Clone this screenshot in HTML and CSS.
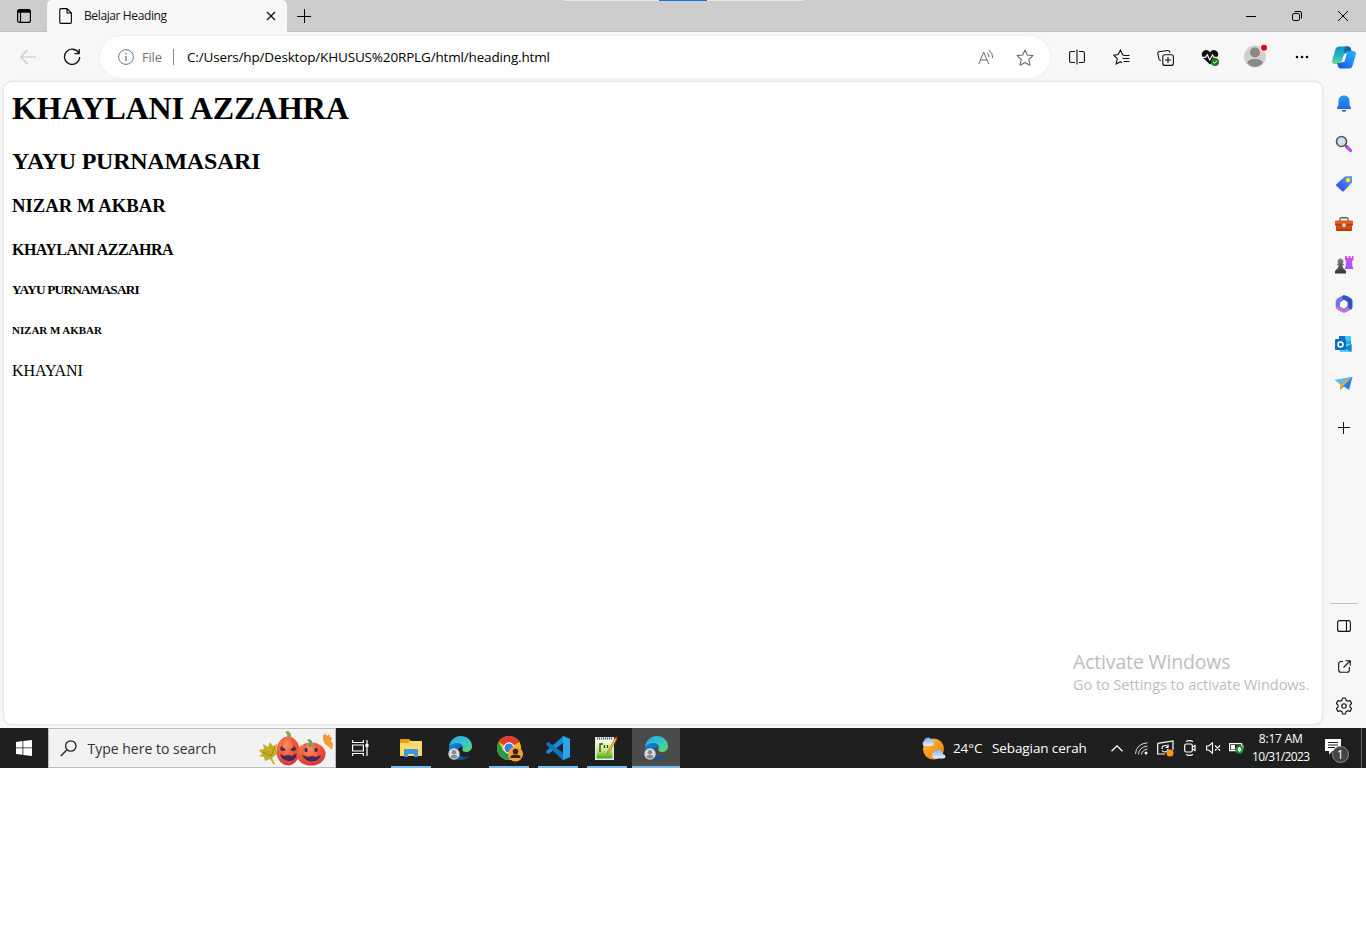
FILE: index.html
```html
<!DOCTYPE html>
<html lang="id">
<head>
<meta charset="utf-8">
<title>Belajar Heading</title>
<link rel="stylesheet" href="styles.css">
</head>
<body>
<svg class="defs" width="0" height="0">
  <defs>
    <linearGradient id="edgeTop" x1="0" y1="0" x2="1" y2="1"><stop offset="0" stop-color="#2aa8e0"/><stop offset=".5" stop-color="#31c3d2"/><stop offset="1" stop-color="#62dc58"/></linearGradient>
    <linearGradient id="edgeLow" x1="0" y1="0" x2="1" y2="1"><stop offset="0" stop-color="#1688d8"/><stop offset="1" stop-color="#0b3f86"/></linearGradient>
    <linearGradient id="bell" x1="0" y1="0" x2="0" y2="1"><stop offset="0" stop-color="#16a0e8"/><stop offset="1" stop-color="#2b62ec"/></linearGradient>
    <linearGradient id="tag" x1="1" y1="0" x2="0" y2="1"><stop offset="0" stop-color="#3fa4fa"/><stop offset="1" stop-color="#3d3ee8"/></linearGradient>
    <linearGradient id="box" x1="0" y1="0" x2="0" y2="1"><stop offset="0" stop-color="#e35a20"/><stop offset="1" stop-color="#bf3406"/></linearGradient>
    <linearGradient id="rook" x1="0" y1="0" x2="0" y2="1"><stop offset="0" stop-color="#e04bec"/><stop offset="1" stop-color="#9b58ff"/></linearGradient>
    <linearGradient id="pawn" x1="0" y1="0" x2="0" y2="1"><stop offset="0" stop-color="#888"/><stop offset="1" stop-color="#333"/></linearGradient>
    <linearGradient id="cpA" x1="0" y1="0" x2="0" y2="1"><stop offset="0" stop-color="#0a92d8"/><stop offset=".6" stop-color="#28bcc0"/><stop offset="1" stop-color="#72d88c"/></linearGradient>
    <linearGradient id="cpB" x1="0" y1="1" x2="1" y2="0"><stop offset="0" stop-color="#174ce0"/><stop offset=".5" stop-color="#1f87fa"/><stop offset="1" stop-color="#29baf7"/></linearGradient>
    <linearGradient id="sun" x1="0" y1="0" x2="1" y2="1"><stop offset="0" stop-color="#ffc02c"/><stop offset="1" stop-color="#f07a18"/></linearGradient>
    <linearGradient id="cloud" x1="0" y1="0" x2="0" y2="1"><stop offset="0" stop-color="#7fb0f0"/><stop offset="1" stop-color="#e6effc"/></linearGradient>
    <radialGradient id="pump" cx=".4" cy=".3" r=".8"><stop offset="0" stop-color="#ff8f60"/><stop offset=".6" stop-color="#ee5230"/><stop offset="1" stop-color="#c22850"/></radialGradient>
    <linearGradient id="npp" x1="0" y1="0" x2="0" y2="1"><stop offset="0" stop-color="#fafff0"/><stop offset=".55" stop-color="#c5ec75"/><stop offset="1" stop-color="#44a818"/></linearGradient>
    <symbol id="edge" viewBox="0 0 24 24">
      <path d="M1 11C2 4 7 0 12.500 0 19 0 24 4.500 24 10c0 4-3 6-6 6-2.500 0-4-1-3.500-2.500C15.500 11 13 8 9 8c-4 0-6 2-8 3z" fill="url(#edgeTop)"/>
      <path d="M1 11c2-3 5-4 8-4 3.500 0 6 2 6.300 4.200C13 9.800 10 11.500 10 15c0 4 4 7 9 5.500 1.500-.5 2.500-1 3.200-1.500C20 22.500 16 24 12.500 24 5 24 0 18 1 11z" fill="url(#edgeLow)"/>
      <circle cx="6" cy="18" r="5.700" fill="#d8d8d8"/><circle cx="6" cy="16.300" r="2.200" fill="#8a8a8a"/><path d="M2.500 21c.5-3 6.500-3 7 0-2 2-5 2-7 0z" fill="#8a8a8a"/>
    </symbol>
  </defs>
</svg>
<div class="screen">
  <header class="titlebar">
    <div class="tab-actions"><svg width="16" height="16" viewBox="0 0 16 16" fill="none" stroke="#000" stroke-width="1.200"><rect x="1.600" y="1.600" width="12.800" height="12.800" rx="2"/><path d="M1.600 3.200h12.800M4.500 4v10.400" /><path d="M2 3.200h12" stroke-width="3"/></svg></div>
    <div class="tab">
      <svg class="doc" width="14" height="16" viewBox="0 0 14 16" fill="none" stroke="#000" stroke-width="1.100"><path d="M2 .6h6l4.400 4.400v9.200q0 1.200-1.200 1.200H2q-1.200 0-1.200-1.200V1.800Q.8.6 2 .6zM8 .6v4.400h4.400"/></svg>
      <span class="tab-title">Belajar Heading</span>
      <svg class="tab-close" width="10" height="10" viewBox="0 0 10 10" stroke="#111" stroke-width="1.300"><path d="M1 1l8 8M9 1L1 9"/></svg>
    </div>
    <div class="new-tab"><svg width="14" height="14" viewBox="0 0 14 14" stroke="#000"><path d="M7.500 0v14M0 7.500h14"/></svg></div>
    <div class="capture-strip"><i></i></div>
    <div class="win-controls">
      <span><svg width="10" height="10" viewBox="0 0 10 10" stroke="#000"><path d="M0 5.500h10"/></svg></span>
      <span><svg width="10" height="10" viewBox="0 0 10 10" fill="none" stroke="#000"><rect x=".5" y="2.500" width="7" height="7" rx="1.300"/><path d="M2.500.5H8Q9.500.5 9.500 2v5.500"/></svg></span>
      <span><svg width="10" height="10" viewBox="0 0 10 10" stroke="#000"><path d="M0 0l10 10M10 0L0 10"/></svg></span>
    </div>
  </header>

  <nav class="toolbar">
    <div class="nav-back"><svg width="16" height="16" viewBox="0 0 16 16" fill="none" stroke="#c8c8c8" stroke-width="1.100"><path d="M16 8H.8M7.500 1L.7 8l6.800 7"/></svg></div>
    <div class="nav-reload"><svg width="18" height="18" viewBox="0 0 18 18" fill="none" stroke="#111" stroke-width="1.300"><path d="M15.800 5.200A7.600 7.600 0 1 0 16.700 9M16.200 1v4.600h-4.700"/></svg></div>
    <div class="omnibox">
      <svg width="16" height="16" viewBox="0 0 16 16" fill="none" stroke="#777"><circle cx="8" cy="8" r="7.400"/><path d="M8 7v5M8 4v1.400" stroke-width="1.300"/></svg>
      <span class="scheme">File</span>
      <i class="sep"></i>
      <span class="url">C:/Users/hp/Desktop/KHUSUS%20RPLG/html/heading.html</span>
      <svg class="read" width="16" height="17" viewBox="0 0 16 17" fill="none" stroke="#6c6c6c"><path d="M.7 15L5.700 3l5 12M2.400 11h6.700M9 3.800q2 1.500 1.800 4.200M10.500 1.200q4.300 2.500 4 7.800"/></svg>
      <svg class="star" width="18" height="17" viewBox="0 0 18 17" fill="none" stroke="#6c6c6c" stroke-width="1.100" stroke-linejoin="round"><path d="M9 1l2.300 5 5.700.6-4.200 3.900 1.100 5.700L9 13.400l-4.900 2.800 1.100-5.700L1 6.600 6.700 6z"/></svg>
    </div>
    <div class="tools">
      <span><svg width="16" height="16" viewBox="0 0 16 16" fill="none" stroke="#111" stroke-width="1.100"><path d="M6 2.500H2Q.6 2.500.6 4v8q0 1.500 1.400 1.500h4M10 2.500h4q1.400 0 1.400 1.500v8q0 1.500-1.400 1.500h-4M8 .5v15"/></svg></span>
      <span><svg width="17" height="17" viewBox="0 0 17 17" fill="none" stroke="#111" stroke-width="1.100"><path d="M11 6L9.500 5.800 7.500 1 5.200 5.500.7 6.100 4.200 9.500 3.200 15l4.300-2.300L9 13.700M10.500 6.500h6M9.500 9.500h7M10.500 12.500h6"/></svg></span>
      <span><svg width="17" height="17" viewBox="0 0 17 17" fill="none" stroke="#111" stroke-width="1.100"><rect x="5.800" y="5.800" width="10.600" height="10.600" rx="2"/><path d="M11 8v6M8 11h6M13 3.700q-.3-2.500-2.500-2.200L2 2.700Q.5 3 .8 4.500L2 10q.3 1.500 2 1.500"/></svg></span>
      <span><svg width="19" height="17" viewBox="0 0 19 17"><path d="M9 15.500L2 9C-.5 6 1 1 5 1q2.500 0 4 2.200Q10.500 1 13 1c4 0 5.500 5 3 8z" fill="#111"/><path d="M0 8.300h4.500l1.800-2.600 2.400 5.300L11.500 6l1.500 2.300h4.500" fill="none" stroke="#f7f7f7" stroke-width="1.200"/><circle cx="14" cy="13" r="4" fill="#16811c"/><path d="M12 13l1.500 1.200 2.600-2.500" fill="none" stroke="#fff"/></svg></span>
      <span class="profile"><svg width="24" height="24" viewBox="0 0 24 24"><circle cx="11" cy="12.500" r="11" fill="#d2d0ce"/><circle cx="11" cy="8.500" r="5" fill="#8b8885"/><path d="M3.300 19.500q0-4.500 7.700-4.500t7.700 4.500Q11 26.500 3.300 19.500z" fill="#8b8885"/><circle cx="20" cy="3.800" r="4" fill="#f7f7f7"/><circle cx="20" cy="3.800" r="3" fill="#e6000c"/></svg></span>
      <span><svg width="14" height="4" viewBox="0 0 14 4"><circle cx="2" cy="2" r="1.300"/><circle cx="7" cy="2" r="1.300"/><circle cx="12" cy="2" r="1.300"/></svg></span>
      <span class="copilot"><svg width="24" height="23" viewBox="0 0 24 23"><path d="M7 .5h9q2.500 0 3 3L20 7h-5l-2.500 1-2.300 8q-.7 2-2.700 2H3q-3.800 0-2.700-4L3.500 3Q4.300.5 7 .5z" fill="url(#cpA)"/><path d="M17 22.500H9q-2.700 0-3.200-2.700L5.200 17h3q2 0 2.600-2l2.300-7.500Q13.800 5 16 5h5q3.700.5 2.700 4L20.500 20q-.8 2.500-3.500 2.500z" fill="url(#cpB)"/><path d="M12.300 7.500H15L12.300 16H9.500z" fill="#f7fcff"/><path d="M13 .5h3q2.500 0 3 3l.5 1.800H16Q13.500 5 12 9z" fill="#14679c"/></svg></span>
    </div>
  </nav>

  <div class="workspace">
    <main class="page">
      <h1>KHAYLANI AZZAHRA</h1>
      <h2>YAYU PURNAMASARI</h2>
      <h3>NIZAR M AKBAR</h3>
      <h4>KHAYLANI AZZAHRA</h4>
      <h5>YAYU PURNAMASARI</h5>
      <h6>NIZAR M AKBAR</h6>
      <p>KHAYANI</p>
      <aside class="watermark"><div class="wm-title">Activate Windows</div><div class="wm-text">Go to Settings to activate Windows.</div></aside>
    </main>
    <aside class="sidebar">
      <span><svg width="16" height="18" viewBox="0 0 16 18"><path d="M5.500 15h5q-.5 2-2.500 2t-2.500-2z" fill="#666"/><path d="M8 .5C4.500.5 2.500 3 2.500 6v4L1 13v1h14v-1l-1.500-3V6C13.500 3 11.500.5 8 .5z" fill="url(#bell)"/></svg></span>
      <span><svg width="18" height="18" viewBox="0 0 18 18"><path d="M11.500 11.500l4 4" stroke="#bd4cf0" stroke-width="3.200" stroke-linecap="round"/><path d="M10 10l2 2" stroke="#555" stroke-width="1.500"/><circle cx="6.500" cy="6.500" r="5" fill="#c5e5fa" stroke="#555" stroke-width="1.600"/></svg></span>
      <span><svg width="18" height="18" viewBox="0 0 18 18"><path d="M10 1.500l6-.5q1 0 1 1v5.500L9 16q-1 1-2 0L1.500 11q-1-1 0-2z" fill="url(#tag)"/><circle cx="13" cy="5" r="1.800" fill="#fff" stroke="#f5c32c" stroke-width="1.400"/></svg></span>
      <span><svg width="18" height="16" viewBox="0 0 18 16"><path d="M5 5V3q0-1.300 1.300-1.300h5.400Q13 1.700 13 3v2" fill="none" stroke="#666" stroke-width="1.400"/><path d="M1 4.500h16q1 0 1 1V9H0V5.500q0-1 1-1z" fill="#e25a20"/><path d="M1 9h16v5q0 1-1 1H2q-1 0-1-1z" fill="url(#box)"/><path d="M0 9h18" stroke="#952803"/><rect x="7.300" y="7.200" width="3.400" height="4" rx="1" fill="#c9c9c9"/></svg></span>
      <span><svg width="20" height="19" viewBox="0 0 20 19"><path d="M11 1h2v2h1.500V1h2v2H18V1h1.500v4l-1.500 1 .5 6 1 2h-9l1-2 .5-6L11 5z" fill="url(#rook)"/><path d="M6.500 3.500a3 3 0 0 1 2 5.200h1.200v1.600H8.400q0 2.500 2 4L12 16v2.500H1V16l1.600-1.700q2-1.500 2-4H3.300V8.700h1.200a3 3 0 0 1 2-5.200z" fill="url(#pawn)"/></svg></span>
      <span><svg width="18" height="18" viewBox="0 0 18 18"><path d="M9 0L4 2.500Q.7 4 .7 7v5L5 14V8l4.500-3.500L12 2z" fill="#6f7ae4"/><path d="M.7 11.500Q1 14 3 15l4 2.300q2 1 4 0l5-2.800q1.300-1 1.300-2.500L13 10l-4 3.500-4-2z" fill="#b573dd"/><path d="M8 0q3 0 5 1.500l3 1.700q1.500 1 1.500 3V12q0 1.500-1.500 2.500L12.500 12V7L8.500 4.500q-2-2 0-4.500z" fill="#2a59b4"/><path d="M9 5.300l3.300 1.900v3.800L9 12.900 5.700 11V7.200z" fill="#fff"/></svg></span>
      <span><svg width="18" height="16" viewBox="0 0 18 16"><rect x="4" y="0" width="12" height="11" rx="1" fill="#28a8ea"/><path d="M4 0h6v5H4z" fill="#1172c0"/><path d="M10 0h5q1 0 1 1v4h-6z" fill="#45c7f4"/><path d="M4 8h12.500v7q0 1-1 1H5z" fill="#50d0f7"/><path d="M16.500 8v8L9 12z" fill="#1684d0"/><rect x="0" y="3" width="11" height="11" rx="1" fill="#0870c4"/><circle cx="5.500" cy="8.500" r="2.500" fill="none" stroke="#fff" stroke-width="1.500"/></svg></span>
      <span><svg width="18" height="16" viewBox="0 0 18 16"><path d="M0 4L17.500 1 14 14 9 10.500 5 14V8z" fill="#2382e8"/><path d="M0 4L17.500 1 5 8z" fill="#51c3fa"/><path d="M5 8L17.500 1 8 10l-3 4z" fill="#f8aa20"/></svg></span>
      <span class="add"><svg width="12" height="12" viewBox="0 0 12 12" stroke="#111"><path d="M5.500 0v12M0 5.500h12"/></svg></span>
      <i class="rule"></i>
      <span><svg width="14" height="12" viewBox="0 0 14 12" fill="none" stroke="#111" stroke-width="1.100"><rect x=".6" y=".6" width="12.800" height="10.800" rx="2"/><path d="M9.500 1v10"/></svg></span>
      <span><svg width="13" height="13" viewBox="0 0 13 13" fill="none" stroke="#111" stroke-width="1.100"><path d="M5 1.500H3Q.7 1.500.7 4v6q0 2.300 2.300 2.300h6q2.300 0 2.300-2.300V7M7.500.7h4.800V5.500M12 1L5.500 7.500"/></svg></span>
      <span><svg width="18" height="18" viewBox="0 0 18 18" fill="none" stroke="#111" stroke-width="1.100" stroke-linejoin="round"><path d="M7.500 1h3l.5 2.300 1.700 1L15 3.600l1.600 2.700L15 8v2l1.600 1.700-1.600 2.700-2.300-.7-1.700 1-.5 2.300h-3L7 14.700l-1.700-1-2.300.7-1.600-2.700L3 10V8L1.400 6.300 3 3.600l2.300.7 1.700-1z"/><circle cx="9" cy="9" r="2.200"/></svg></span>
    </aside>
  </div>

  <footer class="taskbar">
    <div class="start"><svg width="16" height="16" viewBox="0 0 16 16" fill="#fff"><path d="M0 2l6.500-1v6.500H0zM7.300.9L16 0v7.500H7.300zM0 8.300h6.500v6.500L0 14zM7.300 8.300H16V16l-8.700-1z"/></svg></div>
    <div class="search">
      <svg width="17" height="17" viewBox="0 0 17 17" fill="none" stroke="#222" stroke-width="1.300"><circle cx="10.800" cy="6" r="5.200"/><path d="M7 9.800L.8 16"/></svg>
      <span>Type here to search</span>
      <svg class="pumpkins" width="76" height="37" viewBox="0 0 76 37">
        <path d="M1 20l5-1-1-5 5 3 2-5 3 4 4-2-1 6 1 4-5 4 3 6-1 1-4-6-5 2-1-4-5-1 3-2z" fill="#c4ae25"/><path d="M5 22l8 4 4-9" fill="none" stroke="#958414"/>
        <path d="M29 8q1-4-2-6l3-1q4 2 3 7z" fill="#7fae52"/>
        <ellipse cx="30" cy="21" rx="11.500" ry="14.500" fill="url(#pump)"/>
        <path d="M26 8q-4 13 0 26M34 8q4 13 0 26" fill="none" stroke="#d04a3c" stroke-width=".8"/>
        <path d="M22 20l1-4 5 4-2 1zM32 20l5-4 1 4-3 1z" fill="#46265c"/><path d="M22 24l4 2 4-1 4 1 5-3q-2 9-8 8-7 0-9-7z" fill="#46265c"/>
        <ellipse cx="53" cy="24" rx="14.500" ry="11.500" fill="url(#pump)"/>
        <path d="M47 14q-5 10 0 20M58 14q5 10 0 20" fill="none" stroke="#d04a3c" stroke-width=".8"/>
        <path d="M51 15q1-3-2-5l3-1q3 2 2 6l4 2-10-1z" fill="#6ba456"/>
        <ellipse cx="48" cy="20" rx="1.600" ry="2.300" fill="#46265c"/><ellipse cx="58" cy="20" rx="1.600" ry="2.300" fill="#46265c"/><path d="M44 25l6 2 4-1 4 1 5-2q-2 6.500-9 6.500T44 25z" fill="#46265c"/>
        <path d="M65 5l3-1 1 2 2-2 1 3 2 1-1 3 2 3-1 6-3-3-4-3-2-4z" fill="#f79a35"/>
      </svg>
    </div>
    <div class="taskview"><svg width="17" height="16" viewBox="0 0 17 16" fill="none" stroke="#fff" stroke-width="1.200"><path d="M.6 0v2.500h10.800V0M.6 16v-2.500h10.800V16M.6 5h10.800v6H.6zM15 0v16"/><path d="M13.500 5.500h3" stroke-width="3"/></svg></div>
    <div class="apps">
      <span class="open"><svg width="22" height="20" viewBox="0 0 22 20"><path d="M0 2q0-1 1-1h8l2 2h10q1 0 1 1v14H0z" fill="#e6a20c"/><path d="M0 5h8l2-2h11q1 0 1 1v14H0z" fill="#ffd868"/><path d="M4 19v-7q0-1 1-1h12q1 0 1 1v7h-4v-3H8v3z" fill="#3a97e0"/></svg></span>
      <span><svg width="24" height="24"><use href="#edge"/></svg></span>
      <span class="open chrome"><svg width="27" height="26" viewBox="0 0 27 26"><circle cx="12" cy="12" r="12" fill="#fbc116"/><path d="M12 12L1.600 6A12 12 0 0 1 22.400 6z" fill="#e33b2e"/><path d="M1.600 6A12 12 0 0 0 12 24l5.500-9H6.500z" fill="#299b48"/><path d="M12 6.300h10.500L12 0z" fill="#e33b2e"/><circle cx="12" cy="12" r="5.700" fill="#fff"/><circle cx="12" cy="12" r="4.500" fill="#3b7ded"/><circle cx="18.500" cy="18" r="7.500" fill="#f5a040"/><circle cx="18.500" cy="15.500" r="2.800" fill="#38240c"/><path d="M13.500 22v-1q0-2.500 5-2.500t5 2.500v1z" fill="#38240c"/></svg></span>
      <span class="open"><svg width="24" height="24" viewBox="0 0 24 24"><path d="M17 0l7 3v18l-7 3L7 14.500 2.500 18 .3 16.700V15L14 3z" fill="#1d8ad4"/><path d="M.3 7.300L2.500 6 17 17v7L.3 9z" fill="#0f73b8"/><path d="M17 7v10l-6.500-5z" fill="#202022"/><path d="M17 0l7 3v18l-7 3z" fill="#2ca4ee"/></svg></span>
      <span class="open"><svg width="23" height="24" viewBox="0 0 23 24"><path d="M0 1h19v23H0z" fill="#e9e9e9"/><path d="M1.500 4h16v18.500h-16z" fill="url(#npp)"/><path d="M2 2.500h16" stroke="#555" stroke-width="2" stroke-dasharray="1 1"/><path d="M5 16V8h3M9.500 9v3M12.500 9v3" fill="none" stroke="#29401d" stroke-width="1.300"/><path d="M20.500 1.500L13 15l-1 3 2.500-2L22 3z" fill="#f2c23d" stroke="#8d6120" stroke-width=".6"/><path d="M20.500 1.300l1.800 1" stroke="#d63b2c" stroke-width="2"/></svg></span>
      <span class="active"><svg width="24" height="24"><use href="#edge"/></svg></span>
    </div>
    <div class="weather">
      <svg width="25" height="23" viewBox="0 0 25 23"><circle cx="12.500" cy="12" r="10.500" fill="url(#sun)"/><path d="M3 9a3 3 0 0 1 0-5 4 4 0 0 1 7-2 3.500 3.500 0 0 1 3 3.500Q13 9 10 9z" fill="url(#cloud)"/><path d="M13 21.500a3.200 3.200 0 0 1 0-6 4 4 0 0 1 7-1.500q2 1 2 3 2.500.5 2.500 2.500 0 2-2.500 2z" fill="url(#cloud)"/></svg>
      <span class="temp">24°C</span><span class="cond">Sebagian cerah</span>
    </div>
    <div class="tray">
      <span class="t-chev"><svg width="12" height="7" viewBox="0 0 12 7" fill="none" stroke="#fff" stroke-width="1.300"><path d="M.5 6.300L6 .9l5.500 5.400"/></svg></span>
      <span class="t-wifi"><svg width="13" height="13" viewBox="0 0 13 13" fill="none" stroke="#ddd"><path d="M.5 12Q1 2 12.500.8M3.500 12.500Q4 5 12.500 4M6.500 12.500q.5-4.500 6-5.500"/><circle cx="11" cy="11" r="1.500" fill="#fff" stroke="none"/></svg></span>
      <span class="t-sync"><svg width="17" height="17" viewBox="0 0 17 17" fill="none" stroke="#fff" stroke-width="1.200"><path d="M.7 3.300L16 1v9M.7 3.300V14H8M5 9q0-3.500 3-3.500 2 0 3 1.700M11 4.500v3H8.500M11 9q0 3-3 3-2 0-3-1.500"/><circle cx="13" cy="13" r="3.500" fill="#ff9a08" stroke="none"/></svg></span>
      <span class="t-meet"><svg width="12" height="16" viewBox="0 0 12 16" fill="none" stroke="#fff" stroke-width="1.200"><rect x=".7" y="4" width="7.600" height="8" rx="1.500"/><path d="M8.500 7l2.500-1.500v5L8.500 9M2 1.500Q5.500-.2 9 1.500M2 14.500q3.500 1.700 7 0"/></svg></span>
      <span class="t-vol"><svg width="15" height="12" viewBox="0 0 15 12" fill="none" stroke="#fff" stroke-width="1.100"><path d="M.6 4h2L6.500.8v10.400L2.600 8h-2zM9 3.500l5 5M14 3.500l-5 5"/></svg></span>
      <span class="t-batt"><svg width="15" height="12" viewBox="0 0 15 12"><path d="M.6 1.600h12v7H.6z" fill="none" stroke="#fff" stroke-width="1.200"/><path d="M2 3h4v4.500H2zM13 3.500h1.500v3H13z" fill="#fff"/><circle cx="10.500" cy="7.500" r="4.200" fill="#17922d"/><path d="M10.500 4.800q4 3 0 5.200-4-2.200 0-5.200z" fill="#fff"/></svg></span>
      <div class="clock"><span class="time">8:17 AM</span><span class="date">10/31/2023</span></div>
      <div class="notif"><svg width="26" height="26" viewBox="0 0 26 26"><path d="M0 1h16v12H7.500L4 16.500V13H0z" fill="#fff"/><path d="M3 4.500h10M3 7h10M3 9.500h7" stroke="#222"/><circle cx="15.500" cy="16.500" r="8" fill="#444" stroke="#8b8b8b"/></svg><b>1</b></div>
      <i class="peek"></i>
    </div>
  </footer>
</div>
</body>
</html>
```

FILE: styles.css
```css
* { box-sizing: border-box; }
body { margin: 0; background: #fff; font-family: "Open Sans", "Noto Sans", sans-serif; color: #111; }
svg { display: block; flex: none; }
.defs { position: absolute; }
span, h1, h2, h3, h4, h5, h6, p { white-space: nowrap; }
.screen { width: 1366px; height: 768px; display: flex; flex-direction: column; overflow: hidden; background: #f7f7f7; }

.titlebar { position: relative; height: 32px; flex: none; display: flex; background: #cdcdcd; box-shadow: inset 0 -1px #bdbdbd; }
.tab-actions { width: 47px; display: flex; align-items: center; justify-content: center; }
.tab { width: 240px; display: flex; align-items: center; padding: 0 11px 0 12px; background: #f7f7f7; border-radius: 5px 5px 0 0; }
.tab-title { margin-left: 11px; font-size: 12px; letter-spacing: -.38px; line-height: 16px; }
.tab-close { margin-left: auto; }
.new-tab { display: flex; align-items: center; padding-left: 10px; }
.capture-strip { position: absolute; left: 563px; top: 0; width: 241px; height: 1px; background: #e6e6e6; display: flex; padding-left: 96px; }
.capture-strip i { width: 48px; background: #0f7ad6; }
.win-controls { margin-left: auto; display: flex; }
.win-controls span { width: 46px; display: flex; align-items: center; justify-content: center; }

.toolbar { height: 50px; flex: none; display: flex; align-items: center; }
.nav-back { width: 50px; padding-left: 20px; }
.nav-reload { width: 50px; padding-left: 13px; }
.omnibox { width: 950px; height: 42px; border-radius: 21px; background: #fff; display: flex; align-items: center; padding: 0 16px 0 18px; box-shadow: 0 0 3px #e8e8e8; }
.scheme { margin-left: 8px; width: 31px; font-size: 13px; letter-spacing: -.2px; color: #707070; }
.sep { width: 1px; height: 16px; background: #8c8c8c; }
.url { margin-left: 13px; font-size: 13.500px; letter-spacing: -.16px; color: #000; }
.read { margin-left: auto; }
.star { margin-left: 22px; }
.tools { display: flex; padding-left: 5px; }
.tools span { width: 44.300px; height: 30px; flex: none; display: flex; align-items: center; justify-content: center; }
.tools .profile { width: 48px; padding-top: 2px; align-items: flex-start; }
.tools .copilot { width: 40px; }

.workspace { flex: 1; display: flex; padding: 0 0 4px 4px; min-height: 0; }
.page { position: relative; width: 1318px; padding: 8px; background: #fff; border-radius: 8px; box-shadow: 0 0 3px #c8c8c8; font-family: "Liberation Serif", serif; color: #000; }
.page h1 { font-size: 32px; margin: 0 0 21px; line-height: 37px; letter-spacing: -.17px; }
.page h2 { font-size: 24px; margin: 0 0 20px; line-height: 27px; letter-spacing: -.25px; }
.page h3 { font-size: 18.720px; margin: 0 0 24px; line-height: 22px; }
.page h4 { font-size: 16px; margin: 0 0 23px; line-height: 18px; letter-spacing: -.54px; }
.page h5 { font-size: 13.280px; margin: 0 0 27px; line-height: 15px; letter-spacing: -.78px; }
.page h6 { font-size: 11px; margin: 0 0 25px; line-height: 13px; letter-spacing: -.05px; }
.page p { font-size: 16px; margin: 0; line-height: 18px; letter-spacing: -.1px; }
.watermark { position: absolute; left: 1069px; top: 568px; font-family: "Open Sans", sans-serif; color: #bdbdbd; white-space: nowrap; }
.wm-title { font-size: 19.500px; line-height: 24px; width: max-content; letter-spacing: -.17px; }
.wm-text { font-size: 14.500px; line-height: 22px; width: max-content; letter-spacing: -.04px; }
.sidebar { width: 44px; padding-top: 2px; display: flex; flex-direction: column; align-items: center; }
.sidebar span { height: 40px; flex: none; display: flex; align-items: center; justify-content: center; }
.sidebar .add { height: 48px; }
.rule { flex: none; width: 28px; height: 1px; margin: 151px 0 2px; background: #c2c2c2; }

.taskbar { height: 40px; flex: none; display: flex; background: #1f1f20; color: #fff; }
.start { width: 48px; display: flex; align-items: center; justify-content: center; }
.search { width: 288px; display: flex; align-items: center; padding: 0 1px 0 11px; background: #f2f2f2; border: 1px solid #bbb; color: #333; }
.search span { margin-left: 10.500px; font-size: 14px; }
.pumpkins { margin-left: auto; }
.taskview { width: 50px; padding-left: 16px; display: flex; align-items: center; }
.apps { display: flex; }
.apps span { width: 49px; display: flex; align-items: center; justify-content: center; }
.apps .open { background: linear-gradient(#76b9ed, #76b9ed) center bottom / 40px 2px no-repeat; }
.apps .active { width: 48px; margin-left: 1px; background: #4b4b4b; border-bottom: 2px solid #76b9ed; padding-top: 2px; }
.apps .chrome { padding: 2px 0 0 3px; }
.weather { width: 184px; margin-left: auto; display: flex; align-items: center; font-size: 13.500px; letter-spacing: -.1px; }
.temp { margin-left: 7px; width: 39px; }
.tray { width: 261px; display: flex; align-items: center; }
.tray > span { display: flex; justify-content: center; width: 23.700px; }
.tray > .t-chev { width: 24px; }
.tray > .t-wifi { width: 25px; }
.clock { width: 64px; display: flex; flex-direction: column; align-items: center; font-size: 12px; line-height: 18px; }
.time { letter-spacing: -.2px; }
.date { letter-spacing: -.6px; }
.notif { position: relative; width: 48px; padding: 5px 0 0 12px; }
.notif b { position: absolute; left: 24px; top: 14px; font-size: 12px; line-height: 16px; font-weight: 400; }
.peek { width: 1px; height: 40px; background: #666; }
```
